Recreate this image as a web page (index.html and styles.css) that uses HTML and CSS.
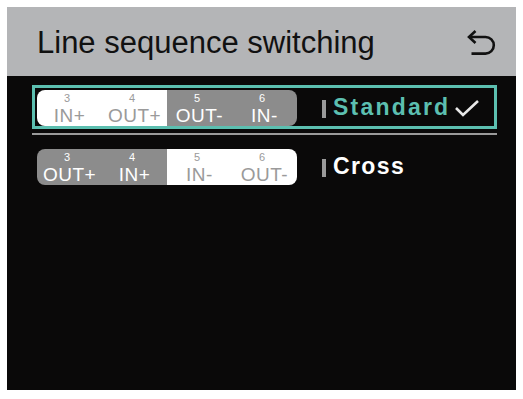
FILE: index.html
```html
<!DOCTYPE html>
<html lang="en">

<head>
    <meta charset="UTF-8">
    <meta name="viewport" content="width=device-width, initial-scale=1.0">
    <title>Line sequence switching</title>
    <link rel="stylesheet" href="styles.css">
</head>

<body>
    <div class="screen">
        <div class="header">
            <h1>Line sequence switching</h1>
            <svg class="back" width="30" height="26" viewBox="0 0 30 26">
                <path d="M3 7 H19.5 A8.3 8.3 0 0 1 19.5 23.6 H5.5" fill="none" stroke="#111" stroke-width="2.6" />
                <path d="M9.5 1 L3 7 L9.5 13" fill="none" stroke="#111" stroke-width="2.6" stroke-linejoin="miter" />
            </svg>
        </div>

        <div class="list">
            <div class="option selected">
                <div class="pill">
                    <div class="half light">
                        <div class="slot"><span class="num">3</span><span class="lbl">IN+</span></div>
                        <div class="slot"><span class="num">4</span><span class="lbl">OUT+</span></div>
                    </div>
                    <div class="half dark">
                        <div class="slot"><span class="num">5</span><span class="lbl">OUT-</span></div>
                        <div class="slot"><span class="num">6</span><span class="lbl">IN-</span></div>
                    </div>
                </div>
                <span class="bar"></span>
                <span class="name">Standard</span>
                <svg class="check" width="26" height="18" viewBox="0 0 26 18">
                    <path d="M2 9 L9 16 L24 2" fill="none" stroke="#e8e8e8" stroke-width="2.6" />
                </svg>
            </div>
            <div class="divider"></div>
            <div class="option">
                <div class="pill">
                    <div class="half dark">
                        <div class="slot"><span class="num">3</span><span class="lbl">OUT+</span></div>
                        <div class="slot"><span class="num">4</span><span class="lbl">IN+</span></div>
                    </div>
                    <div class="half light">
                        <div class="slot"><span class="num">5</span><span class="lbl">IN-</span></div>
                        <div class="slot"><span class="num">6</span><span class="lbl">OUT-</span></div>
                    </div>
                </div>
                <span class="bar"></span>
                <span class="name">Cross</span>
            </div>
        </div>
    </div>
</body>

</html>
```

FILE: styles.css
```css
body {
    margin: 0;
    padding: 7px;
    background: #ffffff;
    font-family: 'Liberation Sans', Arial, sans-serif;
}

.screen {
    width: 509px;
    height: 383px;
    background: #0a0909;
}

.header {
    height: 69px;
    background: #b4b5b7;
    display: flex;
    align-items: center;
    justify-content: space-between;
    padding: 0 20px 0 30px;
}

h1 {
    margin: 0;
    padding-top: 3px;
    font-size: 31px;
    font-weight: normal;
    color: #111;
}

.back {
    margin-top: 2px;
}

.list {
    padding: 9px 19px 0 25px;
}

.option {
    height: 38px;
    display: flex;
    align-items: center;
    padding: 0 2px;
    border: 3px solid transparent;
}

.option.selected {
    border-color: #5cbfb0;
}

.divider {
    height: 2px;
    margin: 4px 0 9px;
    background: #9a9a9a;
}

.pill {
    display: flex;
    width: 260px;
    height: 36px;
    margin-top: 1px;
}

.half {
    flex: 1;
    display: flex;
}

.half:first-child {
    border-radius: 8px 0 0 8px;
}

.half:last-child {
    border-radius: 0 8px 8px 0;
}

.light {
    background: #ffffff;
    color: #9a9a9a;
}

.dark {
    background: #8c8c8c;
    color: #ffffff;
}

.slot {
    flex: 1;
    display: flex;
    flex-direction: column;
    align-items: center;
    padding-top: 3px;
}

.num {
    font-size: 11px;
    line-height: 11px;
    margin-left: -5px;
}

.lbl {
    font-size: 19px;
    line-height: 20px;
    margin-top: 2px;
    letter-spacing: 0.5px;
}

.bar {
    width: 4px;
    height: 18px;
    margin: 3px 7px 0 25px;
    background: #9a9a9a;
}

.name {
    font-size: 23px;
    font-weight: bold;
    letter-spacing: 2.2px;
    color: #ffffff;
}

.option:not(.selected) .name {
    letter-spacing: 1.4px;
    margin-top: 1px;
}

.selected .name {
    color: #5cbfb0;
}

.check {
    margin-left: 4px;
    margin-top: 2px;
}
```
